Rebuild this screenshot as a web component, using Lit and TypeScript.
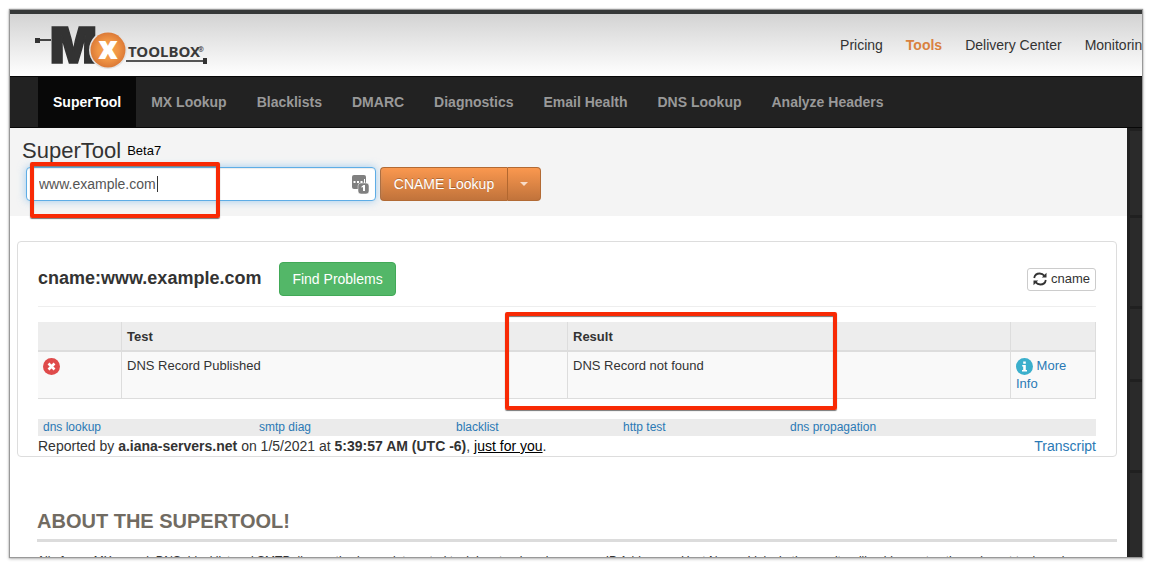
import { LitElement, html, css, svg } from "lit";
import { customElement, state } from "lit/decorators.js";

const MAIN_TABS = ["SuperTool", "MX Lookup", "Blacklists", "DMARC", "Diagnostics", "Email Health", "DNS Lookup", "Analyze Headers"];
const TOP_LINKS = ["Pricing", "Tools", "Delivery Center", "Monitoring"];
const RELATED = ["dns lookup", "smtp diag", "blacklist", "http test", "dns propagation"];

@customElement("mx-logo")
export class MxLogo extends LitElement {
  static styles = css`
    :host { display: block; flex: none; margin-top: 4px; }
    svg { display: block; }
    .m { font: 900 49px Inter, "Open Sans", sans-serif; fill: #333; stroke: #333; stroke-width: 1.5; }
    .x { font: 900 31px "Open Sans", sans-serif; fill: #fff; }
    .word { font: 700 15px "Noto Sans", "Open Sans", sans-serif; fill: #3a3a3a; }
    .reg { font: 700 7px "Noto Sans", sans-serif; fill: #3a3a3a; }
  `;
  render() {
    return html`<svg width="176" height="46" viewBox="0 0 176 46" role="img" aria-label="MX Toolbox">
      <defs>
        <radialGradient id="disc" cx="50%" cy="50%" r="50%">
          <stop offset="0" stop-color="#f9a94f" />
          <stop offset="0.6" stop-color="#ef9445" />
          <stop offset="1" stop-color="#dc7a37" />
        </radialGradient>
      </defs>
      ${svg`
        <rect x="0" y="14" width="5" height="5" fill="#333" />
        <rect x="5" y="15" width="11" height="2" fill="#444" />
        <text class="m" x="15" y="39">M</text>
        <circle cx="73" cy="26" r="19" fill="#e2e2e2" />
        <circle cx="73" cy="26" r="17.500" fill="url(#disc)" />
        <text class="x" x="73" y="35" text-anchor="middle">x</text>
        <text class="word" x="93" y="33">TOOLBOX</text>
        <text class="reg" x="163" y="28">®</text>
        <rect x="91" y="36" width="78" height="2" fill="#555" />
        <rect x="168" y="34" width="4" height="6" fill="#333" />
      `}
    </svg>`;
  }
}

@customElement("app-root")
export class AppRoot extends LitElement {
  @state() private query = "www.example.com";

  static styles = css`
    :host {
      display: block;
      height: 100vh;
      box-sizing: border-box;
      padding: 10px;
      overflow: hidden;
      background: #fff;
      color: #333;
      font: 14px/20px "Liberation Sans", Arial, sans-serif;
    }
    * { box-sizing: border-box; }
    a { color: #2a79b5; text-decoration: none; }
    button, input { font: inherit; margin: 0; }
    .window {
      position: relative;
      height: 100%;
      display: flex;
      flex-direction: column;
      overflow: hidden;
      background: #fff;
    }
    .frame { height: 100%; box-shadow: 0 0 1px 1px #999, 0 1px 3px 1px #bbb; }
    .top {
      flex: none;
      height: 66px;
      display: flex;
      align-items: center;
      padding-left: 25px;
      border-top: 4px solid #363838;
      background: linear-gradient(#d3d3d3, #fff);
    }
    .top-links { display: flex; gap: 23px; margin: 0 -8px 0 auto; flex: none; }
    .top-links a { color: #333; }
    .top-links .current { color: #d9813f; font-weight: bold; }
    .tabs {
      flex: none;
      display: flex;
      padding-left: 28px;
      background: #222;
      border-top: 1px solid #080808;
      border-bottom: 1px solid #080808;
    }
    .tabs a { padding: 15px; color: #999; font-weight: bold; white-space: nowrap; }
    .tabs .current { background: #080808; color: #fff; }
    .body { flex: 1; min-height: 0; display: flex; }
    main { flex: 1; min-width: 0; }
    .rail { flex: none; width: 15px; background: #202020; padding: 3px 0 0 3px; display: flex; flex-direction: column; gap: 3px; }
    .tile { flex: none; background: #2a2a2a; }
    .wide { height: 84px; }
    .mid { height: 88px; }
    .short { height: 70px; }
    .tall { height: 200px; }

    .search { background: #f4f4f4; padding: 12px 16px 15px; height: 88px; }
    .search h1 { margin: 0 -4px; font-size: 22px; line-height: 22px; font-weight: normal; height: 27px; padding: 0; }
    .search small { font-size: 13px; color: #000; vertical-align: 3px; }
    .search form { display: flex; gap: 4px; }
    .field { position: relative; width: 350px; }
    .field input {
      width: 100%;
      height: 34px;
      padding: 6px 12px;
      color: #555;
      border: 1px solid #5eade6;
      border-radius: 4px;
      background: #fff;
      outline: none;
      box-shadow: inset 0 1px 1px rgba(0, 0, 0, 0.08), 0 0 8px rgba(102, 175, 233, 0.6);
    }
    .caret { position: absolute; left: 131px; top: 9px; width: 1px; height: 16px; background: #333; }
    .vault { position: absolute; right: 7px; top: 8px; }
    .split { display: flex; }
    .split button {
      height: 34px;
      border: 1px solid #b26a34;
      color: #fff;
      background: linear-gradient(#fa984f, #c1733b);
      text-shadow: 0 -1px 0 rgba(0, 0, 0, 0.25);
    }
    .lookup { width: 127px; padding: 0; border-radius: 4px 0 0 4px; }
    .split .more { width: 34px; padding: 0; border-left-color: #b2672f; border-radius: 0 4px 4px 0; display: grid; place-items: center; }
    .split .lookup { border-right: 0; }

    .card { margin: 25px 10px 0 7px; padding: 20px 20px 0; border: 1px solid #ddd; border-radius: 4px; }
    .card-head { display: flex; align-items: center; border-bottom: 1px solid #eee; padding-bottom: 10px; }
    .card-head h2 { margin: 0 18px 0 0; font-size: 18px; line-height: 20px; padding-bottom: 2px; }
    .find { height: 34px; padding: 0 12px; color: #fff; background: #53b768; border: 1px solid #41a957; border-radius: 4px; }
    .again {
      margin-left: auto; height: 23px; padding: 0 5px; display: flex; align-items: center; gap: 4px;
      font-size: 13px; color: #333; background: #fff; border: 1px solid #ccc; border-radius: 3px;
    }
    table { width: 100%; margin-top: 15px; border-collapse: separate; border-spacing: 0; table-layout: fixed; font-size: 13px; line-height: 18px; }
    th { height: 30px; padding: 6px 5px 4px; text-align: left; background: #ededed; border-right: 1px solid #ddd; border-bottom: 2px solid #ddd; }
    td { padding: 5px; vertical-align: top; background: #f9f9f9; border-right: 1px solid #ddd; border-bottom: 1px solid #ddd; }
    .c-state { width: 84px; }
    .c-test { width: 446px; }
    .c-info { width: 85px; }
    .badge { vertical-align: top; }
    .bad { display: block; margin-top: 1px; }
    .related { margin: 20px 0 0; padding: 0 5px; list-style: none; display: grid; grid-template-columns: 216fr 197fr 167fr 167fr 301fr; background: #ebebeb; font-size: 12px; line-height: 17px; }
    .report { display: flex; justify-content: space-between; }
    .report p { margin: 0; }
    .report .you { color: #000; text-decoration: underline; }
    .about { margin: 52px 10px 0 27px; }
    .about h2 { margin: 0; padding-bottom: 6px; font-size: 20px; line-height: 24px; color: #716b62; border-bottom: 3px solid #dcdcdc; text-transform: uppercase; }
    .about p { margin: 10px 0 0; font-size: 12px; line-height: 18px; }
    .mark { position: absolute; border: 4px solid #f82a05; border-radius: 2px; box-shadow: 0 1px 1px #777, inset 0 1px 1px #777; pointer-events: none; }
    .mark-query { left: 20px; top: 152px; width: 190px; height: 56px; }
    .mark-result { left: 495px; top: 302px; width: 332px; height: 98px; }
  `;

  render() {
    return html`<div class="frame"><div class="window">
      <header class="top">
        <mx-logo></mx-logo>
        <nav class="top-links" aria-label="Site">
          ${TOP_LINKS.map((t) => html`<a href="#" class=${t === "Tools" ? "current" : ""}>${t}</a>`)}
        </nav>
      </header>
      <nav class="tabs" aria-label="Tools">
        ${MAIN_TABS.map((t, i) => html`<a href="#" class=${i === 0 ? "current" : ""}>${t}</a>`)}
      </nav>
      <div class="body">
        <main>
          <section class="search">
            <h1>SuperTool <small>Beta7</small></h1>
            <form @submit=${(e: Event) => e.preventDefault()}>
              <div class="field">
                <input type="text" aria-label="Domain or host" .value=${this.query}
                  @input=${(e: Event) => (this.query = (e.target as HTMLInputElement).value)} />
                <span class="caret"></span>
                <svg class="vault" width="17" height="19" viewBox="0 0 17 19" aria-hidden="true">
                  <rect width="14" height="14" rx="2" fill="#808080" />
                  <path d="M1.500 6h2v2h-2zM5 6h2v2H5zM8.500 6h2v2h-2zM12 4h1v4h-1z" fill="#fff" />
                  <rect x="6" y="8" width="11" height="11" rx="3" fill="#808080" stroke="#fff" stroke-width="0.500" />
                  <path d="M9.500 11.500 11.500 10h1.500v6h-2v-4l-1.500.8z" fill="#fff" />
                </svg>
              </div>
              <div class="split">
                <button class="lookup" type="submit">CNAME Lookup</button>
                <button class="more" type="button" aria-label="Choose lookup type">
                  <svg width="8" height="4" viewBox="0 0 8 4"><path d="M0 0h8L4 4z" fill="#f8dcc8" /></svg>
                </button>
              </div>
            </form>
          </section>
          <section class="card">
            <div class="card-head">
              <h2>cname:www.example.com</h2>
              <button class="find" type="button">Find Problems</button>
              <button class="again" type="button">
                <svg width="14" height="14" viewBox="0 0 14 14" fill="none" stroke="#333" stroke-width="1.800" aria-hidden="true">
                  <path d="M1.200 6C1.700 3 4 1.500 6.700 1.500c2 0 3.500.8 4.800 2.300M12.800 8c-.5 3-2.800 4.500-5.500 4.500-2 0-3.500-.8-4.800-2.300" />
                  <path d="M13.500.8v4.700H8.800zM.5 13.200V8.500h4.700z" fill="#333" stroke="none" />
                </svg>
                cname
              </button>
            </div>
            <table>
              <colgroup><col class="c-state" /><col class="c-test" /><col /><col class="c-info" /></colgroup>
              <thead><tr><th></th><th>Test</th><th>Result</th><th></th></tr></thead>
              <tbody><tr>
                <td>
                  <svg class="bad" width="17" height="17" viewBox="0 0 17 17" role="img" aria-label="Failed">
                    <circle cx="8.500" cy="8.500" r="8.500" fill="#df4b4b" />
                    <path d="m5.500 5.500 6 6m0-6-6 6" stroke="#fff" stroke-width="2.600" />
                  </svg>
                </td>
                <td>DNS Record Published</td>
                <td>DNS Record not found</td>
                <td><a href="#"><svg class="badge" width="17" height="18" viewBox="0 -1 17 18" aria-hidden="true">
                    <circle cx="8.500" cy="8.500" r="8.500" fill="#3bafcc" />
                    <path d="M7.200 3.500h2.600v2.300H7.200zM6.200 7h3.600v5h1.200v1.500H6V12h1.200V8.500h-1z" fill="#fff" />
                  </svg> More Info</a></td>
              </tr></tbody>
            </table>
            <ul class="related">${RELATED.map((r) => html`<li><a href="#">${r}</a></li>`)}</ul>
            <div class="report">
              <p>Reported by <b>a.iana-servers.net</b> on 1/5/2021 at <b>5:39:57 AM (UTC -6)</b>, <a class="you" href="#">just for you</a>.</p>
              <a href="#">Transcript</a>
            </div>
          </section>
          <section class="about">
            <h2>About the SuperTool!</h2>
            <p>All of your MX record, DNS, blacklist and SMTP diagnostics in one integrated tool. Input a domain name or IP Address or Host Name. Links in the results will guide you to other relevant tools and information.</p>
          </section>
        </main>
        <aside class="rail" aria-hidden="true">
          <div class="tile wide"></div><div class="tile mid"></div><div class="tile short"></div><div class="tile mid"></div><div class="tile tall"></div>
        </aside>
      </div>
      <div class="mark mark-query"></div>
      <div class="mark mark-result"></div>
    </div></div>`;
  }
}
